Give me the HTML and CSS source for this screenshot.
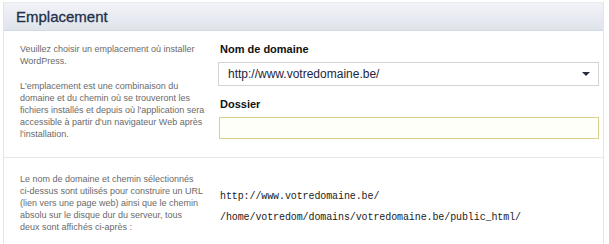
FILE: index.html
```html
<!DOCTYPE html>
<html lang="fr">
<head>
    <meta charset="UTF-8">
    <title>Emplacement</title>
    <link rel="stylesheet" href="styles.css">
</head>
<body>
    <div class="panel">
        <div class="panel-header">Emplacement</div>

        <div class="section">
            <div class="help">
                <p>Veuillez choisir un emplacement où installer WordPress.</p>
                <p>L'emplacement est une combinaison du domaine et du chemin où se trouveront les fichiers installés et depuis où l'application sera accessible à partir d'un navigateur Web après l'installation.</p>
            </div>
            <div class="fields">
                <label class="field-label">Nom de domaine</label>
                <div class="select">
                    <span>http://www.votredomaine.be/</span>
                    <span class="arrow"></span>
                </div>
                <label class="field-label">Dossier</label>
                <input type="text" class="text-input">
            </div>
        </div>

        <div class="section section-last">
            <div class="help">
                <p>Le nom de domaine et chemin sélectionnés ci&#8209;dessus sont utilisés pour construire un URL (lien vers une page web) ainsi que le chemin absolu sur le disque dur du serveur, tous deux sont affichés ci-après :</p>
            </div>
            <div class="paths">
                <div>http://www.votredomaine.be/</div>
                <div>/home/votredom/domains/votredomaine.be/public_html/</div>
            </div>
        </div>
    </div>
</body>
</html>
```

FILE: styles.css
```css
body {
    margin: 0;
    background-color: #fff;
    font-family: "Liberation Sans", Arial, sans-serif;
}
.panel {
    margin: 2px 5px 0 3px;
    border-left: 1px solid #e3e5e9;
    border-right: 1px solid #e3e5e9;
    border-top: 1px solid #e8eaee;
    height: 241px;
    overflow: hidden;
}
.panel-header {
    height: 27px;
    line-height: 27px;
    padding-left: 12px;
    font-size: 15px;
    color: #22304a;
    background: linear-gradient(#f1f3f7, #dfe3eb);
    border-bottom: 1px solid #d3d8e1;
    -webkit-text-stroke: 0.3px #22304a;
}
.section {
    display: flex;
    padding: 12px 0 0 16px;
    height: 114px;
    border-bottom: 1px solid #e6e8eb;
}
.section-last {
    border-bottom: none;
    padding-top: 15px;
    height: 67px;
}
.help {
    flex: none;
    width: 190px;
    font-size: 9px;
    line-height: 12px;
    color: #6a6a6a;
}
.help p {
    margin: 0 0 13px 0;
}
.section-last .help {
    width: 183px;
    margin-right: 7px;
}
.fields {
    margin-left: 8px;
    width: 381px;
}
.field-label {
    display: block;
    font-size: 11px;
    font-weight: bold;
    color: #111;
    margin-left: 2px;
    margin-bottom: 7px;
}
.select {
    display: flex;
    align-items: center;
    justify-content: space-between;
    height: 22px;
    padding: 0 8px 0 9px;
    border: 1px solid #d4d4d4;
    background-color: #fff;
    font-size: 12px;
    color: #1d1f3c;
    margin-bottom: 12px;
}
.arrow {
    width: 0;
    height: 0;
    border-left: 4px solid transparent;
    border-right: 4px solid transparent;
    border-top: 4px solid #2a2f40;
}
.text-input {
    display: block;
    width: 380px;
    height: 22px;
    margin: 0 0 0 1px;
    padding: 0;
    box-sizing: border-box;
    border: 1px solid #dccf8c;
    background-color: #fffff9;
}
.paths {
    margin-left: 10px;
    padding-top: 18px;
    font-family: "Liberation Mono", "Courier New", monospace;
    font-size: 10px;
    letter-spacing: -0.1px;
    color: #222;
}
.paths div {
    margin-bottom: 10px;
}
```
